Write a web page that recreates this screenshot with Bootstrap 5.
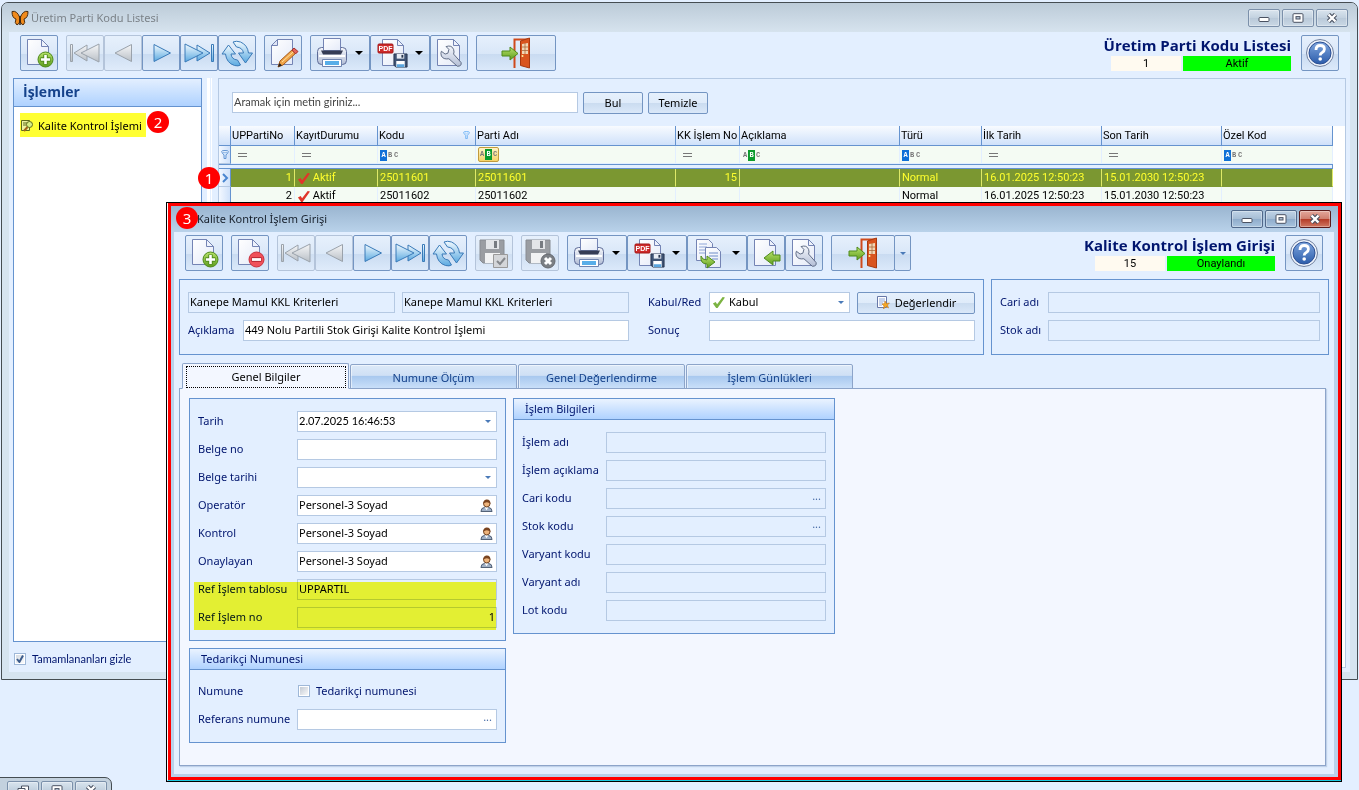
<!DOCTYPE html>
<html lang="tr">
<head>
<meta charset="utf-8">
<meta name="viewport" content="width=device-width, initial-scale=1">
<title>Kalite Kontrol İşlem Girişi</title>
<link rel="stylesheet" href="https://cdn.jsdelivr.net/npm/bootstrap@5.3.0/dist/css/bootstrap.min.css">
<style>
:root{--navy:#00156e;--edge:#6593cf;--soft:#b5c9e3;--face:#e3efff}
body{background:var(--face);font:11px/16px "Noto Sans","Open Sans",sans-serif;color:#000}
.desktop{min-height:100vh;overflow:hidden}
/* windows on the desktop */
.win{position:absolute;display:flex;flex-direction:column}
.win-list{left:1px;right:1px;top:2px;bottom:110px;border:1px solid #454d52;border-radius:7px 7px 0 0;background:#d6e4f0;padding:0 7px 7px}
.win-entry{left:166px;right:17px;top:202px;bottom:8px;border:1px solid #000;background:#b9d1ea}
.win-entry .frame{border:3px solid #f00;flex:1;display:flex;flex-direction:column;padding:0 4px 3px 3px;margin:0 0 1px 1px;box-shadow:-1px 0 #fff,0 1px #1cc8e0}
.win-stub{left:-1px;bottom:-1px;width:113px;height:14px;border:1px solid #454d52;border-radius:0 7px 0 0;background:#c3d1de;overflow:hidden;padding:3px 0 0 7px;flex-direction:row;gap:2px}
.titlebar{display:flex;align-items:center;gap:2px}
.win-list .titlebar{height:29px;margin:0 -7px;padding:0 9px;background:linear-gradient(#bccbd8,#d6e3ee);border-radius:6px 6px 0 0;color:#7b8288}
.win-entry .titlebar{height:26px;margin:0 -4px 0 -3px;padding:0 7px 0 26px;background:linear-gradient(#9ab5d0,#b9d2ea);color:#17202c}
.cap{width:32px;height:18px;padding:0;border:1px solid #7b90aa;border-radius:2px;background:linear-gradient(#d9e4ee,#c2d1df 50%,#b9c9d9 51%,#cad8e5);box-shadow:inset 0 0 0 1px #ffffff55;display:flex;align-items:center;justify-content:center;flex:none}
.win-entry .cap{border-color:#50688a;background:linear-gradient(#c0d3e6,#a5bdd5 50%,#8faccb 51%,#a9c4de)}
.win-entry .cap-close{border-color:#5b1a1a;background:linear-gradient(#e3a79b,#d08070 48%,#b43c28 52%,#cf7862)}
.client{background:var(--face);flex:1;display:flex;flex-direction:column;min-height:0}
/* toolbar */
.tools{display:flex;align-items:flex-start;padding:3px 11px 0;height:46px}
.win-entry .tools{height:47px}
.tb{width:38px;height:36px;padding:0;border:1px solid #7495c2;border-radius:2px;background:linear-gradient(#e6f0fc,#d9e7f8 52%,#c9dbf1 53%,#dbe9fa);display:flex;align-items:center;justify-content:center;flex:none}
.tb svg{width:32px;height:32px}
.tb:disabled{border-color:#b4c4da;background:linear-gradient(#e6f0fc,#dce9f8 52%,#cfdff2 53%,#dfebfa)}
.tb-drop{width:60px;justify-content:space-between;padding:0 6px 0 5px}
.tb-exit{width:80px}
.tb-exit2{width:64px}
.tb-more{width:17px;margin-left:-1px}
.tri{width:0;height:0;border:4px solid transparent;border-top-color:#000;border-bottom:0}
.tri-s{border-width:3px;border-top-color:#4a7ab8;border-bottom:0}
.in .tri-s{margin-right:2px}
.heading{font:700 15px/21px "Open Sans",sans-serif;color:var(--navy);margin:0;text-align:right}
.title-block{margin-right:10px}
.tags{display:flex;justify-content:flex-end;gap:2px}
.tag{height:15px;line-height:15px;text-align:center;font-family:Roboto,sans-serif}
.tag-no{width:70px;background:#fffaf0}
.tag-ok{width:108px;background:#0f0}
/* list window */
.side{width:189px;border:1px solid var(--edge);background:#fff}
.side-head{height:28px;margin:0;padding:0 9px;font:700 14px/26px "Open Sans",sans-serif;color:#15428b;background:linear-gradient(#e3efff,#afd2ff);border-bottom:1px solid var(--edge)}
.mark-y{background:#ff3;height:24px;width:126px;margin:6px;padding:1px 0 0 1px;display:flex;align-items:center;gap:4px;color:#000;text-decoration:none}
.lato{font-family:Lato,sans-serif}
.splitter{width:16px;flex:none;background:linear-gradient(90deg,transparent 5px,#fff 5px,#fff 8px,transparent 8px,transparent 9px,#fff 9px,#fff 10px,transparent 10px)}
.grid-box{border:1px solid var(--soft);flex:1;min-width:0;display:flex;flex-direction:column}
.search{display:flex;gap:5px;padding:13px 12px 12px 13px}
.search .box{width:346px}
.search .pbtn{width:60px}
.box{height:21px;border:1px solid var(--soft);background:#fff;padding:0 1px 2px;border-radius:0;width:100%;min-width:0;font:inherit;color:#000;line-height:18px;outline:0;appearance:none}
.box.lato{font-family:Lato,sans-serif}
.box::placeholder{color:#444}
.box[readonly]{background:transparent}
select.box{padding-left:19px}
.pbtn{height:22px;border:1px solid #7495c2;border-radius:2px;background:linear-gradient(#e6f0fc,#dfebfa 50%,#cbdcf0 52%,#dae8f9);padding:0;font:inherit;color:#000;display:flex;align-items:center;justify-content:center;gap:5px}
.grid-wrap{padding-right:12px}
.grid{table-layout:fixed;width:100%;border-collapse:separate;border-spacing:0;font:11px/16px Roboto,sans-serif}
.c12{width:12px}.c64{width:64px}.c83{width:83px}.c98{width:98px}.c200{width:200px}.c160{width:160px}.c82{width:82px}.c120{width:120px}
.grid th{height:20px;padding:0 1px;font-weight:400;line-height:18px;background:linear-gradient(#f8fbff,#cfe1fa);border-right:1px solid var(--edge);border-bottom:1px solid var(--edge);white-space:nowrap;overflow:hidden}
.grid td{height:18px;padding:1px 2px 0;white-space:nowrap;background:#f4fbf3;border-right:1px solid #e3efff;border-bottom:1px solid #e3efff;overflow:hidden}
.grid .sel td{background:#7b9731;color:#ffff2e;border-right-color:#dfe968;border-bottom-color:#7b9731}
.grid td:first-child,.grid .sel td:first-child{background:linear-gradient(90deg,#f3f8ff,#cfe1fa);border-right-color:var(--edge);border-bottom-color:var(--soft);padding:0}
.grid .split td,.grid .split td:first-child{height:5px;background:#e3efff;border-top:1px solid var(--edge);border-bottom:1px solid var(--edge);border-right:0}
.grid .split td:last-child{border-right:1px solid var(--edge)}
.eq{display:block;width:9px;height:4px;border:solid #777;border-width:1px 0;margin-left:5px}
.abc{display:flex;width:19px;font:700 7px/11px "Liberation Mono",monospace;color:#777;text-align:center}
.abc span{width:6px}
.abc .b,.abc .g{background:#0f70d7;color:#fff;width:7px}
.abc .g{background:#0b9b2d}
.abc-hot{border:1px solid #c29a3c;border-radius:2px;background:linear-gradient(#fff3c4,#f5d469);padding:1px 0;width:21px;height:15px}
.hint{color:#6ab0f5}
.hint-d{color:#5b90d0}
.red-tick{color:#e0352a}
/* entry window */
.pane{border:1px solid var(--edge);background:var(--face)}
.lbl{color:var(--navy);white-space:nowrap;line-height:18px}
.rows{display:flex;flex-direction:column;gap:7px}
.frow{display:flex;align-items:center;height:21px}
.frow>.lbl{flex:none;padding-bottom:2px}
.top-panes{display:flex;gap:7px;padding:0 5px}
.pane-a{width:805px;gap:19px}
.pad-top{padding:12px 8px 13px}
.pad-form{padding:12px 8px}
.pad-short{padding:11px 8px 12px}
.kriter{width:441px}
.kriter .code{width:207px}
.kriter .gap7{gap:7px}
.l48{width:48px}.l55{width:55px}.l61{width:61px}.l84{width:84px}.l99{width:99px}
.eval{width:118px;margin-left:7px;flex:none}
.fld{position:relative;flex:1;min-width:0}
.fld>.box{display:block}
.fld .in{position:absolute;right:4px;top:0;height:21px;display:flex;align-items:center;border:0;background:none;padding:0;color:#4a6ea8}
.sel-icon{position:absolute;left:3px;top:4px;color:#7cb342;pointer-events:none}
.fld .dots{line-height:12px;height:16px;right:5px}
.tabs{display:flex;padding:0 8px;height:26px;align-items:flex-end;gap:1px}
.tabx{width:167px;height:25px;border:1px solid #8ca4c9;border-radius:2px 2px 0 0;background:linear-gradient(#dce9f8,#cfe0f5 45%,#a9c9ef 50%,#c9dff9);color:#15428b;padding:2px 0 0;font:inherit;box-shadow:inset 1px 1px #fff8}
.tabx.on{height:26px;background:#f3f7ff;border-bottom-color:#f3f7ff;color:#000;padding:2px 2px 2px 3px;box-shadow:none;position:relative}
.tabx.on span{display:block;border:1px dotted #000;height:22px;line-height:20px}
.page{border:1px solid #8ca4c9;background:#f3f7ff;flex:1;margin:-1px 8px 8px 5px;padding:9px;display:flex;align-items:flex-start;gap:7px;box-shadow:1px 1px 1px #8ca4c966}
.col-l{width:317px;gap:7px;display:flex;flex-direction:column}
.col-r{width:322px}
.gcap{height:21px;margin:0;padding:0 11px;font:11px/20px "Noto Sans",sans-serif;color:var(--navy);background:linear-gradient(#eaf3ff,#afd2ff);border-bottom:1px solid var(--edge)}
.hl{position:absolute;left:4px;right:9px;top:183px;height:48px;background:#ffff33;mix-blend-mode:multiply;pointer-events:none}
.chk{width:12px;height:12px;appearance:none;border:1px solid #9fb8d8;background:linear-gradient(135deg,#bcc4cf,#fff);box-shadow:inset 0 0 0 1px #fff;margin:0 6px 0 1px;display:block;flex:none}
.chk:checked{background:url("data:image/svg+xml,%3Csvg xmlns='http://www.w3.org/2000/svg' viewBox='0 0 10 10'%3E%3Cpath d='M2 5l2.4 3L8 1.5' fill='none' stroke='%233c5c8c' stroke-width='2'/%3E%3C/svg%3E"),linear-gradient(135deg,#cfd6df,#fff)}
/* numbered step markers over the windows */
.pin{position:absolute;width:22px;height:22px;border-radius:50%;background:#f00;color:#fff;font:15px/22px "Noto Sans",sans-serif;text-align:center;z-index:5}
.pin-1{left:198px;top:167px}
.pin-2{left:147px;top:111px}
.pin-3{left:176px;top:207px}
</style>
</head>
<body>
<svg width="0" height="0" class="position-absolute" aria-hidden="true">
<defs>
<linearGradient id="gB" x1="0" y1="0" x2="0" y2="1"><stop offset="0" stop-color="#f2faff"/><stop offset="1" stop-color="#5aa9e0"/></linearGradient>
<linearGradient id="gG" x1="0" y1="0" x2="0" y2="1"><stop offset="0" stop-color="#f6f7f8"/><stop offset="1" stop-color="#b9bfc6"/></linearGradient>
<linearGradient id="gP" x1="0" y1="0" x2="1" y2="1"><stop offset="0" stop-color="#fff"/><stop offset="1" stop-color="#e4eaf8"/></linearGradient>
<linearGradient id="gN" x1="0" y1="0" x2="0" y2="1"><stop offset="0" stop-color="#b9e36b"/><stop offset="1" stop-color="#5d9c1c"/></linearGradient>
<linearGradient id="gH" x1="0" y1="0" x2="0" y2="1"><stop offset="0" stop-color="#7fa6de"/><stop offset="1" stop-color="#2b5cab"/></linearGradient>
<linearGradient id="gM" x1="0" y1="0" x2="0" y2="1"><stop offset="0" stop-color="#f4f6fb"/><stop offset="1" stop-color="#b3bed6"/></linearGradient>
</defs>
<symbol id="i-new" viewBox="0 0 32 32"><path d="M4.500 2.500h14l7 7v18h-21z" fill="url(#gP)" stroke="#7484b4"/><path d="M18.500 2.500v7h7z" fill="#eef2fb" stroke="#7484b4"/><circle cx="22.500" cy="22.500" r="7.500" fill="url(#gN)" stroke="#4f8a1c"/><path d="M22.500 17.500v10M17.500 22.500h10" stroke="#4f8a1c" stroke-width="4.500"/><path d="M22.500 18v9M18 22.500h9" stroke="#fff" stroke-width="2.600"/></symbol>
<symbol id="i-del" viewBox="0 0 32 32"><path d="M4.500 2.500h14l7 7v18h-21z" fill="url(#gP)" stroke="#7484b4"/><path d="M18.500 2.500v7h7z" fill="#eef2fb" stroke="#7484b4"/><circle cx="22.500" cy="22.500" r="7.500" fill="#f0515a" stroke="#c8303c"/><path d="M17.500 22.500h10" stroke="#a8202c" stroke-width="4.500"/><path d="M18 22.500h9" stroke="#fff" stroke-width="2.800"/></symbol>
<symbol id="i-first" viewBox="0 0 32 32"><path d="M1.500 7.500h2v17h-2zM18 8v16L5 16z" fill="url(#gG)" stroke="#9aa2ab"/><path d="M30 7v18L12 16z" fill="url(#gG)" stroke="#9aa2ab"/></symbol>
<symbol id="i-prev" viewBox="0 0 32 32"><path d="M24.500 7.500v17L8 16z" fill="url(#gG)" stroke="#9aa2ab"/></symbol>
<symbol id="i-next" viewBox="0 0 32 32"><path d="M9 7.500v17L25.500 16z" fill="url(#gB)" stroke="#3a7ab8"/></symbol>
<symbol id="i-last" viewBox="0 0 32 32"><path d="M14 8v16L27 16z" fill="url(#gB)" stroke="#3a7ab8"/><path d="M2 7v18L20 16z" fill="url(#gB)" stroke="#3a7ab8"/><path d="M28.500 7.500h2v17h-2z" fill="url(#gB)" stroke="#3a7ab8"/></symbol>
<symbol id="i-sync" viewBox="0 0 32 32"><path d="M7.500 8L1 17h3.500q1 9 9 11.500 4 1 6-.5l-3-5q-6-.5-6.500-6h4.500z" fill="url(#gB)" stroke="#3a7ab8"/><path d="M24.500 26l7-10h-4q-1-8-8-11-4-1.500-7.500 0l3.500 5q6 .5 7 6h-5z" fill="url(#gB)" stroke="#3a7ab8"/></symbol>
<symbol id="i-edit" viewBox="0 0 32 32"><path d="M10.500 2.500h15v25h-21v-19z" fill="url(#gP)" stroke="#7484b4"/><path d="M10.500 2.500v6h-6z" fill="#dfe5f5" stroke="#7484b4"/><path d="M11 30l2-6L26 12l3.500 3.500L16 28z" fill="#f0a548" stroke="#a45a1c"/><path d="M25 13l2-2 4 3.500-2.500 2.500z" fill="#e4645a" stroke="#a4302c"/><path d="M11 30l1.500-4 2.500 2.500z" fill="#222"/><path d="M15 25L26 15" stroke="#ffe0a0"/></symbol>
<symbol id="i-print" viewBox="0 0 32 32"><rect x="1.500" y="10.500" width="29" height="17" rx="4" fill="url(#gM)" stroke="#5d6c98"/><path d="M7.500 1.500h17v12h-17z" fill="url(#gP)" stroke="#7484b4"/><path d="M5 13.500h22l-2 4H7z" fill="#353c55"/><path d="M3 19h26" stroke="#fff" stroke-width="2"/><path d="M6.500 22.500h19v7h-19z" fill="#fff" stroke="#6f84b0"/><path d="M9 24h14v4H9z" fill="#58aee8"/></symbol>
<symbol id="i-disk" viewBox="0 0 16 16"><path d="M1 1h14v14H3l-2-2z" fill="#3f5475" stroke="#26344e"/><path d="M4 1h8v5H4z" fill="#e8edf5"/><path d="M9 2h2v3H9z" fill="#26344e"/><path d="M3.500 8.500h9V15h-9z" fill="#fff"/><path d="M4 12h8v3H4z" fill="#5aa5de"/></symbol>
<symbol id="i-pdf" viewBox="0 0 32 32"><path d="M6.500 2.500h15l6 6v20h-21z" fill="url(#gP)" stroke="#7484b4"/><path d="M21.500 2.500v6h6z" fill="#eef2fb" stroke="#7484b4"/><rect x="2" y="7" width="15" height="9" rx="1" fill="#cf2a2a" stroke="#a01818"/><text x="9.500" y="14" font-family="Liberation Sans" font-weight="700" font-size="7" fill="#fff" text-anchor="middle">PDF</text><use href="#i-disk" x="17" y="16" width="15" height="15"/></symbol>
<symbol id="wrench" viewBox="0 0 32 32"><path d="M10 12l4 3 3-1 1-4-3-3q6-2 8 3 1 3 0 5l8 9q1 4-4 4l-9-8q-6 1-8-3-1-3 0-5z" fill="url(#gM)" stroke="#59657f"/></symbol>
<symbol id="i-tool" viewBox="0 0 32 32"><path d="M4.500 2.500h16l6 6v20h-22z" fill="url(#gP)" stroke="#7484b4"/><path d="M20.500 2.500v6h6z" fill="#eef2fb" stroke="#7484b4"/><use href="#wrench" x="-1" y="3" width="30" height="30"/></symbol>
<symbol id="i-exit" viewBox="0 0 32 32"><path d="M14.500 31V2.500H28" fill="none" stroke="#cf4a1c" stroke-width="2"/><path d="M20.500 4l9-3v30l-9-2.500z" fill="#d9541e" stroke="#a8380e"/><path d="M22 7l6-1v11h-6z" fill="#f2d6b4"/><path d="M25 6v11M22 10h6M22 13.500h6" stroke="#a86a3c" stroke-width=".8"/><circle cx="22.500" cy="19" r="1" fill="#fff0a0"/><path d="M2 14h8v-4l8 6.500-8 6.500v-4H2z" fill="url(#gN)" stroke="#4f8a1c"/></symbol>
<symbol id="i-help" viewBox="0 0 32 32"><circle cx="16" cy="16" r="13.500" fill="#eef3fb" stroke="#6f7f9e"/><circle cx="16" cy="16" r="11" fill="url(#gH)" stroke="#2b4f93"/><path d="M12 13q0-4.500 4.200-4.500t4.200 3.700q0 2-2.200 3.300-2 1.100-2 3" fill="none" stroke="#fff" stroke-width="2.800"/><circle cx="16.200" cy="22" r="1.800" fill="#fff"/></symbol>
<symbol id="i-gdisk" viewBox="0 0 32 32"><path d="M2 3h24v23H5l-3-3z" fill="#9a9da2" stroke="#888c92"/><path d="M8 3h13v9H8z" fill="#e3e5e8"/><path d="M16 4h3v7h-3z" fill="#777b81"/><path d="M7 16h15v10H7z" fill="#f1f2f3"/></symbol>
<symbol id="i-saveok" viewBox="0 0 32 32"><use href="#i-gdisk" width="32" height="32"/><path d="M15.500 17.500h14v13h-14z" fill="#d4d6d9" stroke="#999"/><path d="M19 24l3 3 5-6" fill="none" stroke="#85888c" stroke-width="2"/></symbol>
<symbol id="i-saveno" viewBox="0 0 32 32"><use href="#i-gdisk" width="32" height="32"/><circle cx="24" cy="24" r="7" fill="#7b7f84" stroke="#66696e"/><path d="M21 21l6 6m0-6l-6 6" stroke="#fff" stroke-width="3"/></symbol>
<symbol id="i-copy" viewBox="0 0 32 32"><path d="M3.500 2.500h12l4 4v17h-16z" fill="url(#gP)" stroke="#7484b4"/><path d="M6 7h8M6 10h8M6 13h6M6 16h6" stroke="#8ea6d8"/><path d="M12.500 10.500h11l4 4v16h-15z" fill="url(#gP)" stroke="#7484b4"/><path d="M16 16h9M16 19h9M19 22h6" stroke="#6f8cc8"/><path d="M8 19q1 4 6 4v-4l8 6-8 6v-4q-7 0-6-8z" fill="url(#gN)" stroke="#4f8a1c"/></symbol>
<symbol id="i-back" viewBox="0 0 32 32"><path d="M4.500 2.500h15l6 6v20h-21z" fill="url(#gP)" stroke="#7484b4"/><path d="M19.500 2.500v6h6z" fill="#eef2fb" stroke="#7484b4"/><path d="M30 18h-7v-4l-9 7 9 7v-4h7z" fill="url(#gN)" stroke="#4f8a1c"/></symbol>
<symbol id="i-man" viewBox="0 0 14 14"><path d="M1 13.500q0-4 4-4.500h4q4 .5 4 4.500z" fill="#9fb0c6" stroke="#46556c"/><path d="M5 9l2 3 2-3z" fill="#fff"/><circle cx="7.300" cy="5" r="3.500" fill="#eeb47c" stroke="#6a3c1a"/><path d="M3.500 5.500q0-5 4-5t3.700 5q-2.500-3-6-1.500z" fill="#7a4420"/></symbol>
<symbol id="i-tick" viewBox="0 0 14 14"><path d="M1 8l3-1.500 1.500 2.500L11.500 1 14 1.500 6 13H4.500z" fill="currentColor"/></symbol>
<symbol id="i-funnel" viewBox="0 0 8 9"><ellipse cx="4" cy="1.600" rx="3.400" ry="1.100" fill="#e9f4ff" stroke="currentColor"/><path d="M.8 2.500L3 5v3.500h2V5l2.200-2.500" fill="#cfe4fb" stroke="currentColor" stroke-width=".9"/></symbol>
<symbol id="c-min" viewBox="0 0 12 10"><rect x="1" y="4.500" width="10" height="4" rx="1" fill="#fff" stroke="#4a5262"/></symbol>
<symbol id="c-max" viewBox="0 0 12 10"><rect x="1" y=".7" width="10" height="8.600" rx="1" fill="#fff" stroke="#4a5262"/><rect x="4" y="3.600" width="4" height="2.400" fill="#b8c8da" stroke="#4a5262"/></symbol>
<symbol id="c-close" viewBox="0 0 12 10"><path d="M2.500 1.500l7 7m0-7l-7 7" stroke="#4a5262" stroke-width="4.500"/><path d="M2.500 1.500l7 7m0-7l-7 7" stroke="#fff" stroke-width="2.400"/></symbol>
<symbol id="c-rest" viewBox="0 0 12 10"><path d="M4.500 1h7v6h-7z" fill="#fff" stroke="#4a5262"/><path d="M1 3.500h7v6H1z" fill="#fff" stroke="#4a5262"/></symbol>
</svg>

<main class="desktop position-relative">

<!-- list window -->
<section class="win win-list">
  <header class="titlebar">
    <svg width="18" height="16" viewBox="0 0 16 16"><path d="M8 8Q5 0 0 1.500 0 8 4 9q-2 4 1 6 3-1 3-6zM8 8q3-8 8-6.500Q16 8 12 9q2 4-1 6-3-1-3-6z" fill="#f08a1c" stroke="#4a2c10"/><path d="M8 6v9" stroke="#3a2410" stroke-width="1.500"/></svg>
    <span class="me-auto">Üretim Parti Kodu Listesi</span>
    <button class="cap" aria-label="Simge durumu"><svg width="12" height="10"><use href="#c-min"/></svg></button>
    <button class="cap" aria-label="Ekranı kapla"><svg width="12" height="10"><use href="#c-max"/></svg></button>
    <button class="cap" aria-label="Kapat"><svg width="12" height="10"><use href="#c-close"/></svg></button>
  </header>
  <div class="client">
    <div class="tools">
      <button class="tb me-2" aria-label="Yeni"><svg><use href="#i-new"/></svg></button>
      <button class="tb" disabled aria-label="İlk"><svg><use href="#i-first"/></svg></button>
      <button class="tb" disabled aria-label="Önceki"><svg><use href="#i-prev"/></svg></button>
      <button class="tb" aria-label="Sonraki"><svg><use href="#i-next"/></svg></button>
      <button class="tb" aria-label="Son"><svg><use href="#i-last"/></svg></button>
      <button class="tb me-2" aria-label="Yenile"><svg><use href="#i-sync"/></svg></button>
      <button class="tb me-2" aria-label="Düzenle"><svg><use href="#i-edit"/></svg></button>
      <button class="tb tb-drop" aria-label="Yazdır"><svg><use href="#i-print"/></svg><i class="tri"></i></button>
      <button class="tb tb-drop" aria-label="PDF"><svg><use href="#i-pdf"/></svg><i class="tri"></i></button>
      <button class="tb me-2" aria-label="Ayarlar"><svg><use href="#i-tool"/></svg></button>
      <button class="tb tb-exit me-auto" aria-label="Çıkış"><svg><use href="#i-exit"/></svg></button>
      <div class="title-block">
        <h1 class="heading">Üretim Parti Kodu Listesi</h1>
        <div class="tags"><div class="tag tag-no">1</div><div class="tag tag-ok">Aktif</div></div>
      </div>
      <button class="tb" aria-label="Yardım"><svg><use href="#i-help"/></svg></button>
    </div>
    <div class="d-flex flex-fill pe-1 pb-1">
      <div class="d-flex flex-column ps-1">
        <nav class="side flex-fill">
          <h2 class="side-head">İşlemler</h2>
          <a href="#" class="mark-y"><svg width="13" height="13" viewBox="0 0 13 13"><path d="M.5 1.500h8v10h-8z" fill="#eef3a0" stroke="#5c6a1c"/><path d="M2 4h4M2 6h3" stroke="#5c6a1c"/><circle cx="8.500" cy="5.500" r="3" fill="#d7ee86" stroke="#5c6a1c"/><path d="M6.500 8L3 12" stroke="#a0641c" stroke-width="2"/></svg>Kalite Kontrol İşlemi</a>
        </nav>
        <label class="d-flex align-items-center lbl lato mt-2"><input type="checkbox" class="chk" checked>Tamamlananları gizle</label>
      </div>
      <div class="splitter"></div>
      <div class="grid-box">
        <div class="search">
          <input class="box lato" placeholder="Aramak için metin giriniz..." aria-label="Ara">
          <button class="pbtn">Bul</button>
          <button class="pbtn">Temizle</button>
        </div>
        <div class="bg-white flex-fill grid-wrap">
          <table class="grid">
            <colgroup><col class="c12"><col class="c64"><col class="c83"><col class="c98"><col class="c200"><col class="c64"><col class="c160"><col class="c82"><col class="c120"><col class="c120"><col></colgroup>
            <thead><tr><th></th><th>UPPartiNo</th><th>KayıtDurumu</th><th><span class="d-flex justify-content-between pe-1">Kodu<svg width="7" height="8" class="mt-1 hint"><use href="#i-funnel"/></svg></span></th><th>Parti Adı</th><th>KK İşlem No</th><th>Açıklama</th><th>Türü</th><th>İlk Tarih</th><th>Son Tarih</th><th>Özel Kod</th></tr></thead>
            <tbody>
            <tr><td><svg width="8" height="9" class="d-block mx-auto hint-d"><use href="#i-funnel"/></svg></td><td><i class="eq"></i></td><td><i class="eq"></i></td><td><span class="abc"><span class="b">A</span><span>B</span><span>C</span></span></td><td class="py-0"><span class="abc abc-hot"><span>A</span><span class="g">B</span><span>C</span></span></td><td><i class="eq"></i></td><td><span class="abc"><span>A</span><span class="g">B</span><span>C</span></span></td><td><span class="abc"><span class="b">A</span><span>B</span><span>C</span></span></td><td><i class="eq"></i></td><td><i class="eq"></i></td><td><span class="abc"><span class="b">A</span><span>B</span><span>C</span></span></td></tr>
            <tr class="split"><td></td><td></td><td></td><td></td><td></td><td></td><td></td><td></td><td></td><td></td><td></td></tr>
            <tr class="sel"><td><svg width="8" height="10" viewBox="0 0 8 10" class="d-block mx-auto"><path d="M2 1l4 4-4 4" fill="none" stroke="#4a86d0" stroke-width="2"/></svg></td><td class="text-end">1</td><td><svg width="13" height="13" class="red-tick"><use href="#i-tick"/></svg> Aktif</td><td>25011601</td><td>25011601</td><td class="text-end">15</td><td></td><td>Normal</td><td>16.01.2025 12:50:23</td><td>15.01.2030 12:50:23</td><td></td></tr>
            <tr><td></td><td class="text-end">2</td><td><svg width="13" height="13" class="red-tick"><use href="#i-tick"/></svg> Aktif</td><td>25011602</td><td>25011602</td><td></td><td></td><td>Normal</td><td>16.01.2025 12:50:23</td><td>15.01.2030 12:50:23</td><td></td></tr>
            </tbody>
          </table>
        </div>
      </div>
    </div>
  </div>
</section>

<!-- minimised window -->
<section class="win win-stub">
  <button class="cap" aria-label="Geri yükle"><svg width="12" height="10"><use href="#c-rest"/></svg></button>
  <button class="cap" aria-label="Ekranı kapla"><svg width="12" height="10"><use href="#c-max"/></svg></button>
  <button class="cap" aria-label="Kapat"><svg width="12" height="10"><use href="#c-close"/></svg></button>
</section>

<!-- entry window -->
<section class="win win-entry">
 <div class="frame">
  <header class="titlebar">
    <span class="me-auto">Kalite Kontrol İşlem Girişi</span>
    <button class="cap" aria-label="Simge durumu"><svg width="12" height="10"><use href="#c-min"/></svg></button>
    <button class="cap" aria-label="Ekranı kapla"><svg width="12" height="10"><use href="#c-max"/></svg></button>
    <button class="cap cap-close" aria-label="Kapat"><svg width="12" height="10"><use href="#c-close"/></svg></button>
  </header>
  <div class="client">
    <div class="tools">
      <button class="tb me-2" aria-label="Yeni"><svg><use href="#i-new"/></svg></button>
      <button class="tb me-2" aria-label="Sil"><svg><use href="#i-del"/></svg></button>
      <button class="tb" disabled aria-label="İlk"><svg><use href="#i-first"/></svg></button>
      <button class="tb" disabled aria-label="Önceki"><svg><use href="#i-prev"/></svg></button>
      <button class="tb" aria-label="Sonraki"><svg><use href="#i-next"/></svg></button>
      <button class="tb" aria-label="Son"><svg><use href="#i-last"/></svg></button>
      <button class="tb me-2" aria-label="Yenile"><svg><use href="#i-sync"/></svg></button>
      <button class="tb me-2" disabled aria-label="Kaydet"><svg><use href="#i-saveok"/></svg></button>
      <button class="tb me-2" disabled aria-label="İptal"><svg><use href="#i-saveno"/></svg></button>
      <button class="tb tb-drop" aria-label="Yazdır"><svg><use href="#i-print"/></svg><i class="tri"></i></button>
      <button class="tb tb-drop" aria-label="PDF"><svg><use href="#i-pdf"/></svg><i class="tri"></i></button>
      <button class="tb tb-drop" aria-label="Kopyala"><svg><use href="#i-copy"/></svg><i class="tri"></i></button>
      <button class="tb" aria-label="İçe aktar"><svg><use href="#i-back"/></svg></button>
      <button class="tb me-2" aria-label="Ayarlar"><svg><use href="#i-tool"/></svg></button>
      <button class="tb tb-exit2" aria-label="Çıkış"><svg><use href="#i-exit"/></svg></button>
      <button class="tb tb-more me-auto" aria-label="Diğer"><i class="tri tri-s"></i></button>
      <div class="title-block">
        <h1 class="heading">Kalite Kontrol İşlem Girişi</h1>
        <div class="tags"><div class="tag tag-no">15</div><div class="tag tag-ok">Onaylandı</div></div>
      </div>
      <button class="tb" aria-label="Yardım"><svg><use href="#i-help"/></svg></button>
    </div>

    <div class="top-panes">
      <div class="pane pane-a pad-top d-flex">
        <div class="rows kriter">
          <div class="frow gap7"><input class="box code" readonly value="Kanepe Mamul KKL Kriterleri" aria-label="Kriter kodu"><input class="box flex-fill w-auto" readonly value="Kanepe Mamul KKL Kriterleri" aria-label="Kriter adı"></div>
          <div class="frow"><label class="lbl l55" for="acik">Açıklama</label><input id="acik" class="box" value="449 Nolu Partili Stok Girişi Kalite Kontrol İşlemi"></div>
        </div>
        <div class="rows flex-fill">
          <div class="frow"><label class="lbl l61" for="kabul">Kabul/Red</label>
            <div class="fld"><select id="kabul" class="box"><option>Kabul</option></select><span class="in pe-none"><i class="tri tri-s"></i></span><svg width="13" height="13" class="sel-icon"><use href="#i-tick"/></svg></div>
            <button class="pbtn eval"><svg width="14" height="14" viewBox="0 0 14 14"><path d="M1.500.5h9v11h-9z" fill="#fff" stroke="#6878a8"/><path d="M3 3h6M3 5h6M3 7h4M3 9h3" stroke="#8ea6d8"/><path d="M9 5l1.500 2.500 3-.5-2 2 1 3-2.500-1.500L7.500 13 8 10 6 8l2.500-.5z" fill="#f5a623" stroke="#b86a10" stroke-width=".5"/></svg>Değerlendir</button></div>
          <div class="frow"><label class="lbl l61" for="sonuc">Sonuç</label><input id="sonuc" class="box"></div>
        </div>
      </div>
      <div class="pane rows flex-fill pad-top">
        <div class="frow"><label class="lbl l48" for="cari">Cari adı</label><input id="cari" class="box" readonly></div>
        <div class="frow"><label class="lbl l48" for="stok">Stok adı</label><input id="stok" class="box" readonly></div>
      </div>
    </div>

    <div class="tabs mt-2" role="tablist">
      <button class="tabx on" role="tab" aria-selected="true"><span>Genel Bilgiler</span></button>
      <button class="tabx" role="tab">Numune Ölçüm</button>
      <button class="tabx" role="tab">Genel Değerlendirme</button>
      <button class="tabx" role="tab">İşlem Günlükleri</button>
    </div>
    <div class="page">
      <div class="col-l">
        <div class="pane rows position-relative pad-form">
          <div class="frow"><label class="lbl l99" for="f1">Tarih</label><div class="fld"><input id="f1" class="box lato" value="2.07.2025 16:46:53"><button class="in" aria-label="Aç"><i class="tri tri-s"></i></button></div></div>
          <div class="frow"><label class="lbl l99" for="f2">Belge no</label><div class="fld"><input id="f2" class="box"></div></div>
          <div class="frow"><label class="lbl l99" for="f3">Belge tarihi</label><div class="fld"><input id="f3" class="box"><button class="in" aria-label="Aç"><i class="tri tri-s"></i></button></div></div>
          <div class="frow"><label class="lbl l99" for="f4">Operatör</label><div class="fld"><input id="f4" class="box" value="Personel-3 Soyad"><button class="in" aria-label="Seç"><svg width="13" height="13"><use href="#i-man"/></svg></button></div></div>
          <div class="frow"><label class="lbl l99" for="f5">Kontrol</label><div class="fld"><input id="f5" class="box" value="Personel-3 Soyad"><button class="in" aria-label="Seç"><svg width="13" height="13"><use href="#i-man"/></svg></button></div></div>
          <div class="frow"><label class="lbl l99" for="f6">Onaylayan</label><div class="fld"><input id="f6" class="box" value="Personel-3 Soyad"><button class="in" aria-label="Seç"><svg width="13" height="13"><use href="#i-man"/></svg></button></div></div>
          <div class="frow"><label class="lbl l99" for="f7">Ref İşlem tablosu</label><div class="fld"><input id="f7" class="box" readonly value="UPPARTIL"></div></div>
          <div class="frow"><label class="lbl l99" for="f8">Ref İşlem no</label><div class="fld"><input id="f8" class="box text-end" readonly value="1"></div></div>
          <div class="hl"></div>
        </div>
        <div class="pane">
          <h2 class="gcap">Tedarikçi Numunesi</h2>
          <div class="rows pad-short">
            <div class="frow"><span class="lbl l99">Numune</span><label class="lbl d-flex align-items-center"><input type="checkbox" class="chk">Tedarikçi numunesi</label></div>
            <div class="frow"><label class="lbl l99" for="g2">Referans numune</label><div class="fld"><input id="g2" class="box"><button class="in dots" aria-label="Seç">...</button></div></div>
          </div>
        </div>
      </div>
      <div class="pane col-r">
        <h2 class="gcap">İşlem Bilgileri</h2>
        <div class="rows pad-form">
          <div class="frow"><label class="lbl l84" for="h1">İşlem adı</label><div class="fld"><input id="h1" class="box" readonly></div></div>
          <div class="frow"><label class="lbl l84" for="h2">İşlem açıklama</label><div class="fld"><input id="h2" class="box" readonly></div></div>
          <div class="frow"><label class="lbl l84" for="h3">Cari kodu</label><div class="fld"><input id="h3" class="box" readonly><button class="in dots" aria-label="Seç">...</button></div></div>
          <div class="frow"><label class="lbl l84" for="h4">Stok kodu</label><div class="fld"><input id="h4" class="box" readonly><button class="in dots" aria-label="Seç">...</button></div></div>
          <div class="frow"><label class="lbl l84" for="h5">Varyant kodu</label><div class="fld"><input id="h5" class="box" readonly></div></div>
          <div class="frow"><label class="lbl l84" for="h6">Varyant adı</label><div class="fld"><input id="h6" class="box" readonly></div></div>
          <div class="frow"><label class="lbl l84" for="h7">Lot kodu</label><div class="fld"><input id="h7" class="box" readonly></div></div>
        </div>
      </div>
    </div>
  </div>
 </div>
</section>

<!-- step markers -->
<span class="pin pin-1">1</span>
<span class="pin pin-2">2</span>
<span class="pin pin-3">3</span>
</main>
<script src="https://cdn.jsdelivr.net/npm/bootstrap@5.3.0/dist/js/bootstrap.bundle.min.js"></script>
</body>
</html>
